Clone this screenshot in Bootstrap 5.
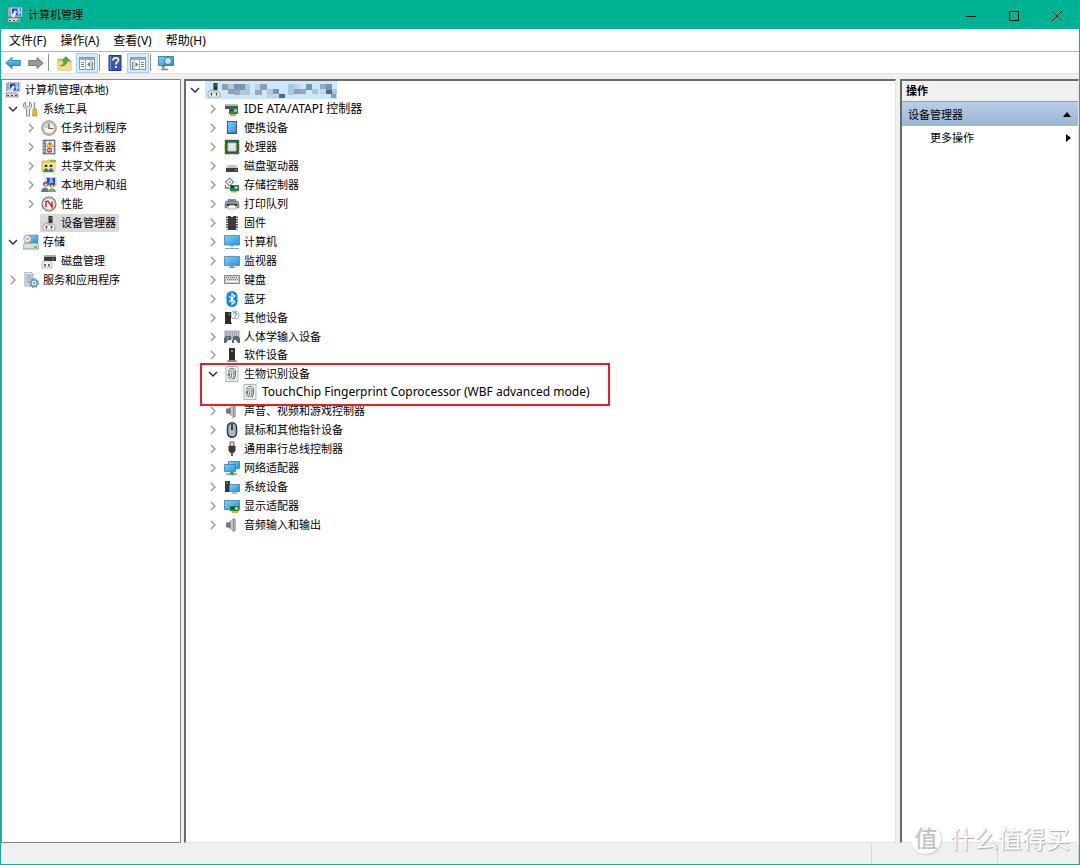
<!DOCTYPE html>
<html lang="zh-CN">
<head>
<meta charset="utf-8">
<meta name="viewport" content="width=device-width, initial-scale=1">
<title>计算机管理</title>
<link href="https://cdn.jsdelivr.net/npm/bootstrap@5.3.0/dist/css/bootstrap.min.css" rel="stylesheet">
<style>
  body { font-family: "Noto Sans", "Noto Sans CJK SC", sans-serif; font-size: 11px; line-height: 19px; color: #000; background: #f0f0f0; }
  a, a:hover { color: inherit; text-decoration: none; }
  button { color: inherit; padding: 0; border: 0; background: none; }
  .app-window { border: 1px solid #0fb299; border-top: 0; }
  .titlebar { background: #00b294; height: 29px; padding: 0 1px 0 6px; }
  .titlebar h1 { font-size: 11px; line-height: 19px; margin-left: 5px; }
  .caption-btn { width: 43px; height: 28px; }
  .menubar { height: 23px; background: #fff; padding-left: 1px; border-bottom: 1px solid #b4b4bc; font-size: 12px; }
  .menubar button { padding: 0 7px; }
  .toolbar { height: 22px; background: #fff; padding-left: 1px; border-bottom: 1px solid #e3e3e3; gap: 1px; }
  .tool { width: 22px; height: 20px; border: 1px solid transparent; }
  .tool.pressed { background: #d5ebfb; border-color: #a5d0f0; }
  .tool-sep { width: 1px; height: 17px; background: #8e8e8e; margin-right: 3px; }
  .workspace { padding-top: 5px; }
  .side-tree { width: 180px; background: #fff; border: 1px solid #828790; padding-left: 2px; margin-right: 3px; }
  .device-pane { background: #fff; border: 2px solid #696969; border-right: 1px solid #e3e3e3; border-bottom: 1px solid #e3e3e3; margin-right: 4px; }
  .action-pane { width: 179px; background: #fff; border: 2px solid #696969; border-right: 1px solid #e3e3e3; border-bottom: 1px solid #e3e3e3; }
  .pane-title { background: #f0f0f0; font-size: 11px; line-height: 20px; padding-left: 4px; border-bottom: 1px solid #a0a0a0; }
  .group-head { height: 24px; background: linear-gradient(#b9cfe7, #9ab4d4); padding: 0 7px 0 6px; }
  .group-item { height: 23px; padding: 0 7px 0 28px; }
  .tree-row { height: 19px; white-space: nowrap; }
  .tree-tight { height: 18px; }
  .tree-kids { padding-left: 18px; }
  .twisty { width: 18px; height: 18px; margin-right: 1px; flex: none; }
  .side-tree .twisty { margin-right: 0; }
  .twisty svg { display: block; margin: auto; }
  .node-label { padding: 0 3px 0 1px; height: 18px; line-height: 18px; }
  .node-label svg { flex: none; }
  .node-label span { margin-left: 4px; }
  .node-label .latin { font-size: 12px; }
  .is-current { background: #d9d9d9; }
  .is-selected { background: #cce8ff; }
  .callout { inset: -1px auto -5px -4px; width: 410px; border: 2px solid #ed1c24; pointer-events: none; }
  .statusbar { height: 20px; background: #f0f0f0; margin-top: 1px; }
  .statusbar div { border-right: 1px solid #d7d7d7; }
  .status-cell { width: 126px; }
  .status-end { width: 81px; }
  .watermark { right: 9px; bottom: 10px; color: #fff; font-size: 24px; line-height: 30px; text-shadow: 1px 1px 1px #aaa, 0 0 1px #ccc; pointer-events: none; }
  .watermark-seal { width: 30px; height: 30px; border-radius: 50%; background: #fff; color: #c4c4c4; margin-right: 9px; box-shadow: 1px 1px 2px #ccc; text-shadow: none; font-size: 23px; line-height: 29px; font-weight: 500; }
</style>
</head>
<body>
<svg class="position-absolute" width="0" height="0" aria-hidden="true">
  <defs>
    <linearGradient id="gScreen" x1="0" y1="0" x2="1" y2="1"><stop offset="0" stop-color="#7fd0f8"/><stop offset="1" stop-color="#2795e0"/></linearGradient>
    <linearGradient id="gMetal" x1="0" y1="0" x2="1" y2="0"><stop offset="0" stop-color="#555"/><stop offset=".6" stop-color="#d8d8d8"/><stop offset="1" stop-color="#777"/></linearGradient>
    <linearGradient id="gBlue" x1="0" y1="0" x2="0" y2="1"><stop offset="0" stop-color="#7fd3f7"/><stop offset="1" stop-color="#0f86cf"/></linearGradient>
  </defs>
  <symbol id="open" viewBox="0 0 10 10"><path d="M1 3l4 4 4-4" fill="none" stroke="#333" stroke-width="1.5"/></symbol>
  <symbol id="shut" viewBox="0 0 10 10"><path d="M3 1l4 4-4 4" fill="none" stroke="#999" stroke-width="1.4"/></symbol>
  <symbol id="mgmt" viewBox="0 0 16 16"><path d="M1 1l3-1v8l-3 2z" fill="#aaa"/><path d="M4 .5h11v9H4z" fill="#dfe3ee" stroke="#9aa" stroke-width=".6"/><path d="M5 1.500h9v7H5z" fill="#1c3fc4"/><path d="M10 1.500h3l1 5-3 2z" fill="#b7c9ff"/><path d="M4 9l4-6 2 2-3 6z" fill="#dfe6ff"/><path d="M1 11h10l2 1v3H1z" fill="#d5d8dc" stroke="#777" stroke-width=".7"/><path d="M2 13.500h2m2 0h2m2 0h2" stroke="#444"/></symbol>
  <symbol id="tools" viewBox="0 0 16 16"><path d="M2.500 1v4l2 1 2-1V1l2 2v3l-2 2v7h-3V8l-3-2V3z" fill="#e4e4e4" stroke="#777" stroke-width=".8"/><path d="M11.500 1v7" stroke="#999" stroke-width="1.600"/><path d="M10 8h3.500l.5 7h-4.500z" fill="#f4b51d" stroke="#b97908" stroke-width=".6"/></symbol>
  <symbol id="clock" viewBox="0 0 16 16"><circle cx="8" cy="8" r="7.300" fill="#c9c9c9" stroke="#777" stroke-width=".8"/><circle cx="8" cy="8" r="5.500" fill="#fff8df" stroke="#999" stroke-width=".5"/><path d="M8 8V2.500A5.500 5.500 0 0 0 2.500 8z" fill="#bcd7f2"/><path d="M8 3.500V8.500h4" fill="none" stroke="#6d5740" stroke-width="1.200"/></symbol>
  <symbol id="event" viewBox="0 0 16 16"><path d="M2 1h12v14H2z" fill="#6e84b5" stroke="#4a5f8f" stroke-width=".7"/><path d="M5 2h8v12H5z" fill="#dde9f7"/><path d="M1 3h3M1 6h3M1 9h3M1 12h3" stroke="#ccc"/><path d="M9 2.500l4 5H5z" fill="#ffd21c" stroke="#ad8500" stroke-width=".5"/><path d="M9 4v2" stroke="#222"/><circle cx="8.500" cy="11" r="2.600" fill="#d83b3b"/><path d="M7 11h3" stroke="#fff"/></symbol>
  <symbol id="share" viewBox="0 0 16 16"><path d="M1 3h5l1-1h7v12H1z" fill="#f0cd62" stroke="#c49a2c" stroke-width=".6"/><path d="M2 5h13l-1 10H2z" fill="#f8e190"/><path d="M9 2h6v2H9z" fill="#77c060"/><circle cx="5" cy="8" r="1.500" fill="#333"/><circle cx="10" cy="8" r="1.500" fill="#333"/><path d="M2.500 14c0-5 5-5 5 0zM7.500 14c0-5 5-5 5 0z" fill="#3078a8"/><path d="M4 9.500h2m3 0h2" stroke="#f2d5b0"/></symbol>
  <symbol id="users" viewBox="0 0 16 16"><path d="M5 0h10v9H5z" fill="#dfe3ee" stroke="#888" stroke-width=".5"/><path d="M6 1h8v7H6z" fill="#1c48c8"/><path d="M9 1l2 0 2 7H8z" fill="#99b4ff"/><circle cx="4.500" cy="7" r="2.600" fill="#8b6237"/><circle cx="4.800" cy="8" r="1.600" fill="#e8bd93"/><path d="M0 15c0-6 8-6 8 0z" fill="#4e7ac0"/><circle cx="11" cy="8" r="2.300" fill="#554233"/><circle cx="11" cy="9" r="1.500" fill="#e8bd93"/><path d="M7 15c0-5 8-5 8 0z" fill="#83a859"/></symbol>
  <symbol id="perf" viewBox="0 0 16 16"><circle cx="8" cy="8" r="7" fill="#f4f4f4" stroke="#666" stroke-width="1.100"/><circle cx="8" cy="8" r="5.300" fill="#fff" stroke="#999" stroke-width=".6"/><path d="M5 11V5.500l2-.5 4 6V5.500" fill="none" stroke="#d82020" stroke-width="1.500"/></symbol>
  <symbol id="devmgr" viewBox="0 0 16 16"><path d="M7.500 1h4v7h-4z" fill="#333"/><path d="M9 3h2" stroke="#35d04b"/><path d="M4 8h3v1h5l2 2v4H2v-4z" fill="#d6d6d6" stroke="#999" stroke-width=".7"/><path d="M3 11h10v3.500H3z" fill="#f5f5f5"/><path d="M5.500 11v2.500m5-2.500v2.500" stroke="#333" stroke-width="1.400"/></symbol>
  <symbol id="storage" viewBox="0 0 16 16"><path d="M5 1h10v8H7z" fill="url(#gScreen)" stroke="#51839e" stroke-width=".6"/><circle cx="4.500" cy="5" r="3.800" fill="#e2e9e7" stroke="#879894" stroke-width=".8"/><circle cx="4.500" cy="5" r="1" fill="#999"/><path d="M2 9h12l2 3v3H0v-3z" fill="#ddd" stroke="#777" stroke-width=".7"/><path d="M11 13h3" stroke="#20bc48" stroke-width="1.400"/></symbol>
  <symbol id="diskmgr" viewBox="0 0 16 16"><path d="M4 2h10l1 3v3H3V5z" fill="#383838"/><path d="M4 2h10l1 2H3z" fill="#aaa"/><path d="M11 6h2" stroke="#3bdc50"/><path d="M2 8h7l2 2v5H1v-5z" fill="#efefef" stroke="#999" stroke-width=".6"/><path d="M4 11v2.500m4-2.500v2.500" stroke="#333" stroke-width="1.400"/></symbol>
  <symbol id="services" viewBox="0 0 16 16"><path d="M2 0h6l2 2v12H2z" fill="#e5ecf2" stroke="#7690a8" stroke-width=".8"/><path d="M3.500 3h5m-5 2h5m-5 2h5m-5 2h3m-3 2h3" stroke="#6b8ca8"/><circle cx="11" cy="11" r="3.200" fill="#eaf2fa" stroke="#6894b8" stroke-width="1.600"/><circle cx="11" cy="11" r="4.500" fill="none" stroke="#6894b8" stroke-width="1.200" stroke-dasharray="1.800 1.734"/><circle cx="11" cy="11" r="1.100" fill="#6894b8"/></symbol>
  <symbol id="ide" viewBox="0 0 16 16"><path d="M2 3h10l2 2v3H1V5z" fill="#555"/><path d="M2 3h10l2 2H1z" fill="#bbb"/><path d="M5 7h9v6H5z" fill="#26834c"/><path d="M6 8h3v2H6z" fill="#185b36"/><circle cx="11.500" cy="9.500" r="1.500" fill="#a2d8b3"/><path d="M6 13h6v2H6z" fill="#f0a51c"/></symbol>
  <symbol id="portable" viewBox="0 0 16 16"><path d="M3 1h10v13H3z" fill="#365a70"/><path d="M4 2h8v10.500H4z" fill="url(#gScreen)"/></symbol>
  <symbol id="cpu" viewBox="0 0 16 16"><path d="M1 1h14v14H1z" fill="#286044"/><path d="M1 .7h14M1 15.300h14M.7 1v14M15.300 1v14" stroke="#c2a54f" stroke-dasharray="1 1"/><path d="M4 4h8v8H4z" fill="#e6e6e6" stroke="#b8c7bd"/></symbol>
  <symbol id="drive" viewBox="0 0 16 16"><path d="M4 7h8l2 3H2z" fill="#c4c4c4"/><path d="M2 10h12v4H2z" fill="#3e3e3e"/><path d="M11 12h2" stroke="#48df54"/></symbol>
  <symbol id="stctl" viewBox="0 0 16 16"><path d="M5.500 1l4 4-4 4-4-4z" fill="#fff" stroke="#444"/><path d="M4.500 5h2" stroke="#333"/><path d="M1.500 8v3h4" fill="none" stroke="#777" stroke-width="1.300"/><path d="M6 8h9v6H6z" fill="#26834c"/><circle cx="12" cy="10.500" r="1.500" fill="#a2d8b3"/><path d="M7 9h3v2H7z" fill="#143f27"/><path d="M7 14h6v1.500H7z" fill="#f0a51c"/></symbol>
  <symbol id="printer" viewBox="0 0 16 16"><path d="M4 3h4v2H4z" fill="#3898ed"/><path d="M8 3h4v2H8z" fill="#3ec66a"/><path d="M2 5h12l1 3v4h-2V9H3v3H1V8z" fill="#8f9394" stroke="#666" stroke-width=".5"/><path d="M3 8h10v2H3z" fill="#222"/><path d="M5 9h6l1 4H4z" fill="#fff" stroke="#777" stroke-width=".6"/></symbol>
  <symbol id="firmware" viewBox="0 0 16 16"><path d="M4 1h3v1h2V1h3v14H4z" fill="#3b3b3b"/><path d="M3 1.500v13m10-13v13" stroke="#555" stroke-width="2" stroke-dasharray="1.500 1"/></symbol>
  <symbol id="computer" viewBox="0 0 16 16"><path d="M.5 1.500h15v9.500H.5z" fill="url(#gScreen)" stroke="#4683a8" stroke-width=".8"/><path d="M6 11.500h4v1H6z" fill="#888"/><path d="M1 14.500h14" stroke="#8aa4b5"/></symbol>
  <symbol id="monitor" viewBox="0 0 16 16"><path d="M.5 3.500h15v9H.5z" fill="url(#gScreen)" stroke="#4683a8" stroke-width=".8"/><path d="M7 13h2v1h2v1H5v-1h2z" fill="#888"/></symbol>
  <symbol id="keyboard" viewBox="0 0 16 16"><path d="M.5 3.500h15v8H.5z" fill="#d0d3d5" stroke="#888"/><path d="M2 5.500h12M3 7.500h11" stroke="#777" stroke-dasharray="1 1"/><path d="M2 9.500h2m1 0h6m1 0h2" stroke="#fff"/></symbol>
  <symbol id="bt" viewBox="0 0 16 16"><rect x="2.500" y="0" width="11" height="16" rx="5.500" fill="#0a84ec"/><path d="M5 5l6 6-3 2.500v-11L11 5l-6 6" fill="none" stroke="#fff" stroke-width="1.200"/></symbol>
  <symbol id="other" viewBox="0 0 16 16"><path d="M1 2h6v10l1 2H1z" fill="#2d2d2d"/><path d="M4 4h2" stroke="#42df50"/><circle cx="11" cy="5" r="4" fill="#f5faff" stroke="#8ea2b2" stroke-width=".8"/><path d="M9.500 4c0-2 3-2 3 0 0 1-1.500 1-1.500 2m0 1v1" fill="none" stroke="#176bc0"/></symbol>
  <symbol id="hid" viewBox="0 0 16 16"><path d="M1 2h14v6H1z" fill="#bfc6ca" stroke="#888" stroke-width=".7"/><path d="M2 4h12M2 6h12" stroke="#889" stroke-dasharray="1 1"/><path d="M0 14V9l2-2h4l2 2 2-2h4l2 2v5h-2l-2-3h-2v3H8v-3H4l-2 3z" fill="#566570"/><circle cx="3.500" cy="9" r="1.200" fill="#42b3f5"/><circle cx="8" cy="10" r="1" fill="#ddd"/></symbol>
  <symbol id="soft" viewBox="0 0 16 16"><path d="M5 1h6v12H5z" fill="#2e2e2e"/><path d="M7 4h2" stroke="#44e652" stroke-width="1.400"/><path d="M4 13h8l1 2H3z" fill="#888"/></symbol>
  <symbol id="finger" viewBox="0 0 16 16"><path d="M2 .5h12v15H2z" fill="#eef3f3" stroke="#a9b7b7"/><path d="M4.500 6c0-5 7-5 7 0 0 3 0 5-1.500 7.500M6 13.500c2-2 1-5 2-7m-3.500 6C6 10 5 8 6 6c.5-2 4-2 4 0 0 3 0 5-1.700 7.500M4 10l.5-3" fill="none" stroke="#6a6a6a"/></symbol>
  <symbol id="speaker" viewBox="0 0 16 16"><path d="M2 5.500h3v5H2z" fill="#777"/><path d="M5 5.500L10 1v14l-5-4.500z" fill="url(#gMetal)" stroke="#777" stroke-width=".4"/><path d="M11 2v12" stroke="#8b949a" stroke-width="1.300"/></symbol>
  <symbol id="mouse" viewBox="0 0 16 16"><rect x="3.500" y=".8" width="9" height="14.400" rx="4.500" fill="#a9bac7" stroke="#303840" stroke-width="1.500"/><path d="M8 2v6" stroke="#222" stroke-width="1.500"/></symbol>
  <symbol id="usb" viewBox="0 0 16 16"><path d="M6 1h4v4H6z" fill="#ddd" stroke="#666"/><path d="M4.500 5h7v5l-2 2h-3l-2-2z" fill="#3a3a3a"/><path d="M8 12v3" stroke="#444" stroke-width="1.700"/></symbol>
  <symbol id="net" viewBox="0 0 16 16"><path d="M4.500 1.500h11v7h-11z" fill="url(#gScreen)" stroke="#287eb7" stroke-width=".8"/><path d="M.5 4.500h11v7H.5z" fill="url(#gScreen)" stroke="#2c82ae" stroke-width=".8"/><path d="M2 14h11" stroke="#7acb88" stroke-width="1.800"/><path d="M6 12h4v3H6z" fill="#43a457"/></symbol>
  <symbol id="sys" viewBox="0 0 16 16"><path d="M1 2h5v11H1z" fill="#343b40"/><path d="M2 4h2" stroke="#4be15c"/><path d="M5.500 5.500h10v7h-10z" fill="url(#gScreen)" stroke="#377da8" stroke-width=".8"/><path d="M8 14h5" stroke="#777"/></symbol>
  <symbol id="display" viewBox="0 0 16 16"><path d="M.5 2.500h15v9H.5z" fill="url(#gScreen)" stroke="#377da8" stroke-width=".8"/><path d="M6 8h9v5H6z" fill="#287a48"/><path d="M7 9h3v2H7z" fill="#123b22"/><circle cx="12.500" cy="10.500" r="1.500" fill="#b2ddb8"/><path d="M8 13h6v2H8z" fill="#e8b321"/></symbol>
  <symbol id="back" viewBox="0 0 16 16"><path d="M.7 8L7 2.500v3h8.300v5H7v3z" fill="url(#gBlue)" stroke="#1b77ab" stroke-width=".8"/></symbol>
  <symbol id="fwd" viewBox="0 0 16 16"><path d="M15.300 8L9 2.500v3H.7v5H9v3z" fill="#999" stroke="#666" stroke-width=".8"/></symbol>
  <symbol id="up" viewBox="0 0 16 16"><path d="M2 4h4l1 2h8v9H2z" fill="#eccb72" stroke="#a98532" stroke-width=".7"/><path d="M2 7h13v8H2z" fill="#f5da8d"/><path d="M4 10.500c3 0 4-2 4-5H6l4-4 4 4h-3c0 4-3 6-7 5z" fill="#4bb534" stroke="#277d1c" stroke-width=".5"/></symbol>
  <symbol id="paneL" viewBox="0 0 16 16"><path d="M.5 2.500h15v12H.5z" fill="#fff" stroke="#8995a5"/><path d="M1 4h14" stroke="#9eabba" stroke-width="2"/><path d="M2 7.500h3m-3 2h3m-3 2h3M13.500 7v7" stroke="#6887a8"/><path d="M6.500 5v9M12 5v9" stroke="#aaa"/><path d="M11 7v5L8 9.500z" fill="#35a536"/></symbol>
  <symbol id="paneR" viewBox="0 0 16 16"><path d="M.5 2.500h15v12H.5z" fill="#fff" stroke="#8995a5"/><path d="M1 4h14" stroke="#9eabba" stroke-width="2"/><path d="M11 7.500h3m-3 2h3m-3 2h3M2.500 7v7" stroke="#6887a8"/><path d="M9.500 5v9M4 5v9" stroke="#aaa"/><path d="M5.500 7v5l3-2.500z" fill="#35a536"/></symbol>
  <symbol id="help" viewBox="0 0 16 16"><path d="M2 .5h12v15H2z" fill="#3556b5" stroke="#203a86"/><path d="M3.500 1v14" stroke="#7892da"/><path d="M6 5.500c0-3.500 5.500-3.500 5.500-.5 0 2-2.700 2-2.700 4.500M8.800 11v2" fill="none" stroke="#fff" stroke-width="1.800"/></symbol>
  <symbol id="scan" viewBox="0 0 16 16"><path d="M.5 1.500h15v9H.5z" fill="url(#gScreen)" stroke="#4683a8"/><path d="M3 14.500h7M6 11v3" stroke="#718896" stroke-width="1.400"/><circle cx="10" cy="6" r="3.600" fill="#b9e4fa" stroke="#4c7e99"/><path d="M7.500 8.500L4 12.500" stroke="#557d94" stroke-width="1.500"/></symbol>
</svg>

<div class="app-window position-relative d-flex flex-column min-vh-100">
  <header class="titlebar d-flex align-items-center">
    <svg width="16" height="16"><use href="#mgmt"/></svg>
    <h1 class="fw-normal mb-0 me-auto">计算机管理</h1>
    <button class="caption-btn" aria-label="最小化"><svg width="10" height="10"><path d="M0 5.500h10" stroke="#000"/></svg></button>
    <button class="caption-btn" aria-label="最大化"><svg width="10" height="10"><path d="M.5.500h9v9h-9z" fill="none" stroke="#000"/></svg></button>
    <button class="caption-btn" aria-label="关闭"><svg width="10" height="10"><path d="M0 0l10 10M10 0L0 10" stroke="#000"/></svg></button>
  </header>
  <nav class="menubar d-flex align-items-center" aria-label="菜单">
    <button>文件(F)</button><button>操作(A)</button><button>查看(V)</button><button>帮助(H)</button>
  </nav>
  <div class="toolbar d-flex align-items-center" role="toolbar" aria-label="工具栏">
    <button class="tool d-flex align-items-center justify-content-center" aria-label="后退"><svg width="16" height="16"><use href="#back"/></svg></button>
    <button class="tool d-flex align-items-center justify-content-center" aria-label="前进"><svg width="16" height="16"><use href="#fwd"/></svg></button>
    <span class="tool-sep"></span>
    <button class="tool d-flex align-items-center justify-content-center" aria-label="向上一级"><svg width="16" height="16"><use href="#up"/></svg></button>
    <button class="tool pressed d-flex align-items-center justify-content-center" aria-label="显示控制台树"><svg width="16" height="16"><use href="#paneL"/></svg></button>
    <span class="tool-sep"></span>
    <button class="tool d-flex align-items-center justify-content-center" aria-label="帮助"><svg width="16" height="16"><use href="#help"/></svg></button>
    <button class="tool pressed d-flex align-items-center justify-content-center" aria-label="显示操作窗格"><svg width="16" height="16"><use href="#paneR"/></svg></button>
    <span class="tool-sep"></span>
    <button class="tool d-flex align-items-center justify-content-center" aria-label="扫描"><svg width="16" height="16"><use href="#scan"/></svg></button>
  </div>

  <main class="workspace d-flex flex-grow-1">
    <nav class="side-tree flex-shrink-0" aria-label="控制台树">
      <div class="tree-row d-flex align-items-center"><a class="node-label d-flex align-items-center" href="#"><svg width="16" height="16"><use href="#mgmt"/></svg><span>计算机管理(本地)</span></a></div>
      <ul class="list-unstyled mb-0">
        <li>
          <div class="tree-row d-flex align-items-center"><button class="twisty" aria-label="折叠"><svg width="10" height="10"><use href="#open"/></svg></button><a class="node-label d-flex align-items-center" href="#"><svg width="16" height="16"><use href="#tools"/></svg><span>系统工具</span></a></div>
          <ul class="list-unstyled tree-kids">
            <li class="tree-row d-flex align-items-center"><button class="twisty" aria-label="展开"><svg width="10" height="10"><use href="#shut"/></svg></button><a class="node-label d-flex align-items-center" href="#"><svg width="16" height="16"><use href="#clock"/></svg><span>任务计划程序</span></a></li>
            <li class="tree-row d-flex align-items-center"><button class="twisty" aria-label="展开"><svg width="10" height="10"><use href="#shut"/></svg></button><a class="node-label d-flex align-items-center" href="#"><svg width="16" height="16"><use href="#event"/></svg><span>事件查看器</span></a></li>
            <li class="tree-row d-flex align-items-center"><button class="twisty" aria-label="展开"><svg width="10" height="10"><use href="#shut"/></svg></button><a class="node-label d-flex align-items-center" href="#"><svg width="16" height="16"><use href="#share"/></svg><span>共享文件夹</span></a></li>
            <li class="tree-row d-flex align-items-center"><button class="twisty" aria-label="展开"><svg width="10" height="10"><use href="#shut"/></svg></button><a class="node-label d-flex align-items-center" href="#"><svg width="16" height="16"><use href="#users"/></svg><span>本地用户和组</span></a></li>
            <li class="tree-row d-flex align-items-center"><button class="twisty" aria-label="展开"><svg width="10" height="10"><use href="#shut"/></svg></button><a class="node-label d-flex align-items-center" href="#"><svg width="16" height="16"><use href="#perf"/></svg><span>性能</span></a></li>
            <li class="tree-row d-flex align-items-center"><span class="twisty"></span><a class="node-label is-current d-flex align-items-center" href="#" aria-current="page"><svg width="16" height="16"><use href="#devmgr"/></svg><span>设备管理器</span></a></li>
          </ul>
        </li>
        <li>
          <div class="tree-row d-flex align-items-center"><button class="twisty" aria-label="折叠"><svg width="10" height="10"><use href="#open"/></svg></button><a class="node-label d-flex align-items-center" href="#"><svg width="16" height="16"><use href="#storage"/></svg><span>存储</span></a></div>
          <ul class="list-unstyled tree-kids">
            <li class="tree-row d-flex align-items-center"><span class="twisty"></span><a class="node-label d-flex align-items-center" href="#"><svg width="16" height="16"><use href="#diskmgr"/></svg><span>磁盘管理</span></a></li>
          </ul>
        </li>
        <li class="tree-row d-flex align-items-center"><button class="twisty" aria-label="展开"><svg width="10" height="10"><use href="#shut"/></svg></button><a class="node-label d-flex align-items-center" href="#"><svg width="16" height="16"><use href="#services"/></svg><span>服务和应用程序</span></a></li>
      </ul>
    </nav>

    <section class="device-pane flex-grow-1" aria-label="设备">
      <div class="tree-row tree-tight d-flex align-items-center"><button class="twisty" aria-label="折叠"><svg width="10" height="10"><use href="#open"/></svg></button><a class="node-label is-selected d-flex align-items-center pe-0" href="#" aria-label="本机"><svg width="16" height="16"><use href="#devmgr"/></svg><svg width="115" height="16" shape-rendering="crispEdges">
        <path d="M0 2h6v6H0zM38 2h7v6h-7zM72 7h6v5h-6z" fill="#8ca0b5"/>
        <path d="M6 2h6v5H6zM17 7h7v6h-7zM45 7h6v6h-6z" fill="#b7c6d4"/>
        <path d="M12 2h11v6H12zM51 7h6v5h-6zM84 2h6v6h-6zM104 2h6v6h-6z" fill="#7894b5"/>
        <path d="M12 8h6v5h-6zM33 8h7v5h-7zM78 7h6v5h-6zM98 2h6v5h-6z" fill="#92a9c3"/>
        <path d="M23 2h5v11h-5zM66 2h6v11h-6zM90 7h6v5h-6zM110 7h5v5h-5z" fill="#a8c7df"/>
        <path d="M57 12h6v4h-6zM104 8h6v4h-6z" fill="#4c6590"/>
        <path d="M33 2h5v6h-5zM45 13h12v3H45zM98 7h6v5h-6zM72 2h6v5h-6z" fill="#bdd5e7"/>
        <path d="M109 12h5v4h-5zM6 7h6v5H6z" fill="#899bc0"/>
      </svg></a></div>
      <ul class="list-unstyled mb-0 tree-kids">
        <li class="tree-row d-flex align-items-center"><button class="twisty" aria-label="展开"><svg width="10" height="10"><use href="#shut"/></svg></button><a class="node-label d-flex align-items-center" href="#"><svg width="16" height="16"><use href="#ide"/></svg><span class="latin">IDE ATA/ATAPI 控制器</span></a></li>
        <li class="tree-row d-flex align-items-center"><button class="twisty" aria-label="展开"><svg width="10" height="10"><use href="#shut"/></svg></button><a class="node-label d-flex align-items-center" href="#"><svg width="16" height="16"><use href="#portable"/></svg><span>便携设备</span></a></li>
        <li class="tree-row d-flex align-items-center"><button class="twisty" aria-label="展开"><svg width="10" height="10"><use href="#shut"/></svg></button><a class="node-label d-flex align-items-center" href="#"><svg width="16" height="16"><use href="#cpu"/></svg><span>处理器</span></a></li>
        <li class="tree-row d-flex align-items-center"><button class="twisty" aria-label="展开"><svg width="10" height="10"><use href="#shut"/></svg></button><a class="node-label d-flex align-items-center" href="#"><svg width="16" height="16"><use href="#drive"/></svg><span>磁盘驱动器</span></a></li>
        <li class="tree-row d-flex align-items-center"><button class="twisty" aria-label="展开"><svg width="10" height="10"><use href="#shut"/></svg></button><a class="node-label d-flex align-items-center" href="#"><svg width="16" height="16"><use href="#stctl"/></svg><span>存储控制器</span></a></li>
        <li class="tree-row d-flex align-items-center"><button class="twisty" aria-label="展开"><svg width="10" height="10"><use href="#shut"/></svg></button><a class="node-label d-flex align-items-center" href="#"><svg width="16" height="16"><use href="#printer"/></svg><span>打印队列</span></a></li>
        <li class="tree-row d-flex align-items-center"><button class="twisty" aria-label="展开"><svg width="10" height="10"><use href="#shut"/></svg></button><a class="node-label d-flex align-items-center" href="#"><svg width="16" height="16"><use href="#firmware"/></svg><span>固件</span></a></li>
        <li class="tree-row d-flex align-items-center"><button class="twisty" aria-label="展开"><svg width="10" height="10"><use href="#shut"/></svg></button><a class="node-label d-flex align-items-center" href="#"><svg width="16" height="16"><use href="#computer"/></svg><span>计算机</span></a></li>
        <li class="tree-row d-flex align-items-center"><button class="twisty" aria-label="展开"><svg width="10" height="10"><use href="#shut"/></svg></button><a class="node-label d-flex align-items-center" href="#"><svg width="16" height="16"><use href="#monitor"/></svg><span>监视器</span></a></li>
        <li class="tree-row d-flex align-items-center"><button class="twisty" aria-label="展开"><svg width="10" height="10"><use href="#shut"/></svg></button><a class="node-label d-flex align-items-center" href="#"><svg width="16" height="16"><use href="#keyboard"/></svg><span>键盘</span></a></li>
        <li class="tree-row d-flex align-items-center"><button class="twisty" aria-label="展开"><svg width="10" height="10"><use href="#shut"/></svg></button><a class="node-label d-flex align-items-center" href="#"><svg width="16" height="16"><use href="#bt"/></svg><span>蓝牙</span></a></li>
        <li class="tree-row d-flex align-items-center"><button class="twisty" aria-label="展开"><svg width="10" height="10"><use href="#shut"/></svg></button><a class="node-label d-flex align-items-center" href="#"><svg width="16" height="16"><use href="#other"/></svg><span>其他设备</span></a></li>
        <li class="tree-row d-flex align-items-center"><button class="twisty" aria-label="展开"><svg width="10" height="10"><use href="#shut"/></svg></button><a class="node-label d-flex align-items-center" href="#"><svg width="16" height="16"><use href="#hid"/></svg><span>人体学输入设备</span></a></li>
        <li class="tree-row tree-tight d-flex align-items-center"><button class="twisty" aria-label="展开"><svg width="10" height="10"><use href="#shut"/></svg></button><a class="node-label d-flex align-items-center" href="#"><svg width="16" height="16"><use href="#soft"/></svg><span>软件设备</span></a></li>
        <li class="position-relative">
          <div class="tree-row d-flex align-items-center"><button class="twisty" aria-label="折叠"><svg width="10" height="10"><use href="#open"/></svg></button><a class="node-label d-flex align-items-center" href="#"><svg width="16" height="16"><use href="#finger"/></svg><span>生物识别设备</span></a></div>
          <ul class="list-unstyled tree-kids">
            <li class="tree-row tree-tight d-flex align-items-center"><span class="twisty"></span><a class="node-label d-flex align-items-center" href="#"><svg width="16" height="16"><use href="#finger"/></svg><span class="latin">TouchChip Fingerprint Coprocessor (WBF advanced mode)</span></a></li>
          </ul>
          <div class="callout position-absolute"></div>
        </li>
        <li class="tree-row d-flex align-items-center"><button class="twisty" aria-label="展开"><svg width="10" height="10"><use href="#shut"/></svg></button><a class="node-label d-flex align-items-center" href="#"><svg width="16" height="16"><use href="#speaker"/></svg><span>声音、视频和游戏控制器</span></a></li>
        <li class="tree-row d-flex align-items-center"><button class="twisty" aria-label="展开"><svg width="10" height="10"><use href="#shut"/></svg></button><a class="node-label d-flex align-items-center" href="#"><svg width="16" height="16"><use href="#mouse"/></svg><span>鼠标和其他指针设备</span></a></li>
        <li class="tree-row d-flex align-items-center"><button class="twisty" aria-label="展开"><svg width="10" height="10"><use href="#shut"/></svg></button><a class="node-label d-flex align-items-center" href="#"><svg width="16" height="16"><use href="#usb"/></svg><span>通用串行总线控制器</span></a></li>
        <li class="tree-row d-flex align-items-center"><button class="twisty" aria-label="展开"><svg width="10" height="10"><use href="#shut"/></svg></button><a class="node-label d-flex align-items-center" href="#"><svg width="16" height="16"><use href="#net"/></svg><span>网络适配器</span></a></li>
        <li class="tree-row d-flex align-items-center"><button class="twisty" aria-label="展开"><svg width="10" height="10"><use href="#shut"/></svg></button><a class="node-label d-flex align-items-center" href="#"><svg width="16" height="16"><use href="#sys"/></svg><span>系统设备</span></a></li>
        <li class="tree-row d-flex align-items-center"><button class="twisty" aria-label="展开"><svg width="10" height="10"><use href="#shut"/></svg></button><a class="node-label d-flex align-items-center" href="#"><svg width="16" height="16"><use href="#display"/></svg><span>显示适配器</span></a></li>
        <li class="tree-row d-flex align-items-center"><button class="twisty" aria-label="展开"><svg width="10" height="10"><use href="#shut"/></svg></button><a class="node-label d-flex align-items-center" href="#"><svg width="16" height="16"><use href="#speaker"/></svg><span>音频输入和输出</span></a></li>
      </ul>
    </section>

    <aside class="action-pane flex-shrink-0">
      <h2 class="pane-title mb-0 fw-bold">操作</h2>
      <button class="group-head w-100 d-flex align-items-center justify-content-between"><span>设备管理器</span><svg width="8" height="5"><path d="M0 5l4-5 4 5z"/></svg></button>
      <button class="group-item w-100 d-flex align-items-center justify-content-between"><span>更多操作</span><svg width="5" height="8"><path d="M0 0l5 4-5 4z"/></svg></button>
    </aside>
  </main>

  <footer class="statusbar d-flex">
    <div class="flex-grow-1"></div><div class="status-cell"></div><div class="status-end"></div>
  </footer>
  <div class="watermark position-absolute d-flex align-items-center"><span class="watermark-seal text-center">值</span><span>什么值得买</span></div>
</div>
<script src="https://cdn.jsdelivr.net/npm/bootstrap@5.3.0/dist/js/bootstrap.bundle.min.js"></script>
</body>
</html>
